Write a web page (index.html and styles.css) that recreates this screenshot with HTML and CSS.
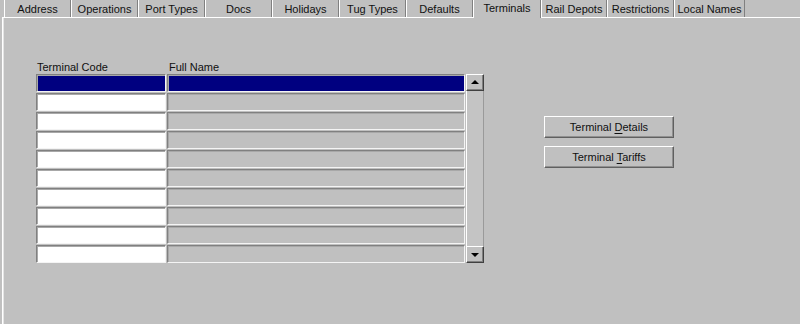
FILE: index.html
```html
<!DOCTYPE html>
<html>
<head>
<meta charset="utf-8">
<link rel="stylesheet" href="styles.css">
</head>
<body>
<div class="tabs">
  <div class="tab">Address</div>
  <div class="tab">Operations</div>
  <div class="tab">Port Types</div>
  <div class="tab">Docs</div>
  <div class="tab">Holidays</div>
  <div class="tab">Tug Types</div>
  <div class="tab">Defaults</div>
  <div class="tab active">Terminals</div>
  <div class="tab narrow">Rail Depots</div>
  <div class="tab">Restrictions</div>
  <div class="tab wide">Local Names</div>
</div>
<div class="panel">
  <div class="content">
    <div class="table">
      <div class="head">
        <div class="col-code label">Terminal Code</div>
        <div class="col-name label">Full Name</div>
      </div>
      <div class="body">
        <div class="rows">
          <div class="row selected"><div class="cell code"></div><div class="cell name"></div></div>
          <div class="row"><div class="cell code"></div><div class="cell name"></div></div>
          <div class="row"><div class="cell code"></div><div class="cell name"></div></div>
          <div class="row"><div class="cell code"></div><div class="cell name"></div></div>
          <div class="row"><div class="cell code"></div><div class="cell name"></div></div>
          <div class="row"><div class="cell code"></div><div class="cell name"></div></div>
          <div class="row"><div class="cell code"></div><div class="cell name"></div></div>
          <div class="row"><div class="cell code"></div><div class="cell name"></div></div>
          <div class="row"><div class="cell code"></div><div class="cell name"></div></div>
          <div class="row"><div class="cell code"></div><div class="cell name"></div></div>
        </div>
        <div class="scrollbar">
          <div class="sb-btn"><span class="arrow up"></span></div>
          <div class="sb-track"></div>
          <div class="sb-btn"><span class="arrow down"></span></div>
        </div>
      </div>
    </div>
    <div class="buttons">
      <div class="btn">Terminal <u>D</u>etails</div>
      <div class="btn">Terminal <u>T</u>ariffs</div>
    </div>
  </div>
</div>
</body>
</html>
```

FILE: styles.css
```css
html, body {
  margin: 0;
  padding: 0;
  width: 800px;
  height: 324px;
  overflow: hidden;
  background: #c0c0c0;
  font-family: "Liberation Sans", Arial, sans-serif;
  font-size: 11px;
  color: #000;
}

.tabs {
  display: flex;
  padding-left: 4px;
  height: 17px;
}

.tab {
  box-sizing: border-box;
  width: 67px;
  height: 17px;
  border-left: 1px solid #ffffff;
  border-right: 1px solid #808080;
  text-align: center;
  line-height: 13px;
  padding-top: 3px;
  white-space: nowrap;
  color: #101010;
}

.tab.wide { width: 71px; }
.tab.narrow { width: 66px; }

.tab.active {
  width: 68px;
  height: 18px;
  padding-top: 2px;
  position: relative;
  z-index: 2;
  background: #c0c0c0;
}

.panel {
  margin-left: 2px;
  height: 320px;
  border-top: 1px solid #ffffff;
  border-left: 1px solid #ffffff;
  box-shadow: inset 1px 0 0 #e4e4e4;
}

.content {
  display: flex;
  align-items: flex-start;
  padding: 43px 0 0 33px;
}

.head {
  display: flex;
  height: 13px;
  line-height: 12px;
}

.label {
  padding-left: 1px;
  color: #101010;
}

.col-code { width: 130px; margin-right: 1px; }
.col-name { width: 298px; }

.body {
  display: flex;
  gap: 1px;
}

.rows {
  display: flex;
  flex-direction: column;
  gap: 1px;
}

.row {
  display: flex;
  gap: 1px;
}

.cell {
  box-sizing: border-box;
  height: 18px;
  border-top: 1px solid #808080;
  border-left: 1px solid #808080;
  border-bottom: 1px solid #f4f4f4;
  border-right: 1px solid #f4f4f4;
  box-shadow: inset 1px 1px 0 #a8a8a8;
}

.cell.code { width: 130px; background: #ffffff; }
.cell.name { width: 298px; background: #c0c0c0; }

.row.selected .cell { background: #000080; }

.scrollbar {
  box-sizing: border-box;
  width: 18px;
  height: 189px;
  display: flex;
  flex-direction: column;
}

.sb-btn {
  box-sizing: border-box;
  height: 17px;
  background: #c0c0c0;
  border-top: 1px solid #ffffff;
  border-left: 1px solid #ffffff;
  border-right: 1px solid #404040;
  border-bottom: 1px solid #404040;
  box-shadow: inset -1px -1px 0 #808080;
  display: flex;
  align-items: center;
  justify-content: center;
}

.sb-track {
  flex: 1;
  box-sizing: border-box;
  background: #c4c4c4;
  border-left: 1px solid #ffffff;
  border-right: 1px solid #9a9a9a;
}

.arrow {
  width: 0;
  height: 0;
  border-left: 4px solid transparent;
  border-right: 4px solid transparent;
}
.arrow.up { border-bottom: 4px solid #000; margin-top: -1px; }
.arrow.down { border-top: 4px solid #000; margin-top: 1px; }

.buttons {
  display: flex;
  flex-direction: column;
  gap: 8px;
  margin-left: 60px;
  margin-top: 55px;
}

.btn {
  box-sizing: border-box;
  width: 130px;
  height: 22px;
  border-top: 1px solid #ffffff;
  border-left: 1px solid #ffffff;
  border-right: 1px solid #606060;
  border-bottom: 1px solid #606060;
  box-shadow: inset -1px -1px 0 #909090;
  text-align: center;
  line-height: 20px;
  color: #101010;
}

.btn u {
  text-decoration-thickness: 1px;
  text-underline-offset: 2px;
}
```
